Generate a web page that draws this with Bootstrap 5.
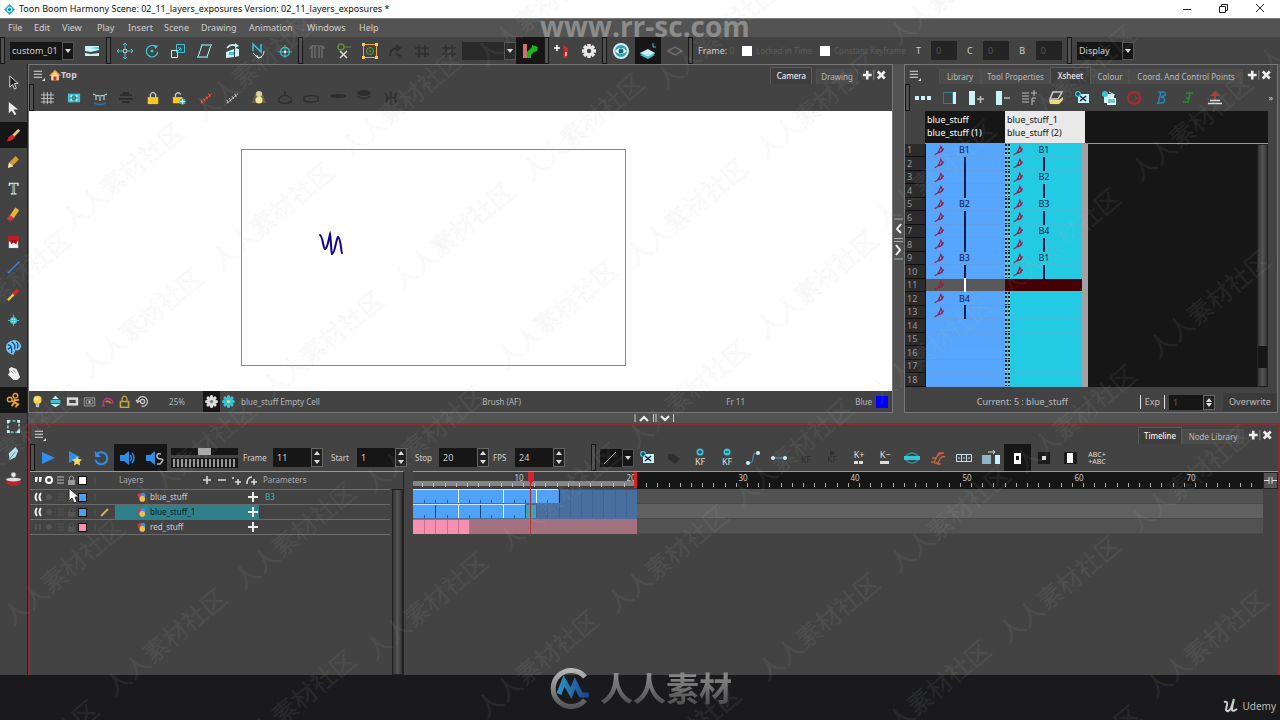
<!DOCTYPE html>
<html lang="en">
<head>
<meta charset="utf-8">
<meta name="viewport" content="width=device-width, initial-scale=1">
<title>Toon Boom Harmony</title>
<link href="https://cdn.jsdelivr.net/npm/bootstrap@5.3.0/dist/css/bootstrap.min.css" rel="stylesheet">
<style>
:root{--panel:#434343;--gap:#535353;--line:#777;--well:#161616;--ui:"Noto Sans","Noto Sans CJK SC",sans-serif}
body{font:9px/14px var(--ui);color:#cfcfcf;background:var(--gap);overflow-x:hidden}
button{background:none;border:0;padding:0;color:inherit;font:inherit}
svg{display:block;flex:none;overflow:visible}
input,select{font:inherit;color:inherit;border:0;border-radius:0;padding:0;margin:0;appearance:none}
.titlebar{height:18px;background:#fff;color:#111;font-size:9px;line-height:18px}
.titlebar .win{width:37px;height:18px}
.menubar{height:19px;background:var(--gap);border-top:1px solid #777}
.menubar a{color:#cfcfcf;text-decoration:none;font-size:9px;line-height:17px}
.toolbar-main{height:27px;background:var(--panel);display:grid;grid-template-columns:6px 72px 28px 6px 186px 6px 158px 54px 28px 4px 54px 6px 80px 6px 48px 78px 91px 51px 52px 53px 6px 1fr}
.grip{width:5px;border:1px solid #161616;background:#505050;align-self:stretch;flex:none}
.tools{display:flex;flex:none;align-self:stretch}
.tools button{flex:1 1 0;min-width:0;display:flex;align-items:center;justify-content:center}
.tools .on,.on{background:#161616}
.dim{opacity:.3}
.combo{display:flex;height:18px;background:var(--well);align-items:center;position:relative}
.combo select{background:transparent;width:100%;min-width:0;height:18px;padding-left:2px;font-size:9px}
.combo.off{background:#2a2a2a}
.combo i{flex:none;width:12px;height:18px;border:1px solid #555;position:relative}
.combo i::after,.spin b::after,.spin b::before{content:"";position:absolute;border:3px solid transparent}
.combo i::after{left:2px;top:6px;border-top:4px solid #ddd}
#display{width:57px}
.off{color:#5b5b5b}
.keys{font-size:8px}
.keys input{flex:none}
.num{height:19px;width:26px;background:#242424;color:#555;padding-left:5px}
.tick{width:10px;height:10px;background:#fff}
.sidebar-tools{width:28px;background:var(--panel);border-right:1px solid #222}
.sidebar-tools>div{height:424px;margin-top:5px;display:flex;flex-direction:column;justify-content:space-between}
.sidebar-tools button{width:27px;height:26px;display:flex;align-items:center;justify-content:center}
.pane{background:var(--panel);border:1px solid var(--line)}
.upper{height:349px}
.pane-head{height:19px}
.pane-tools{height:27px}
.tabbtn{background:#4b4b4b;color:#b9b9b9;height:15px;align-self:flex-end;border:1px solid #505050;border-bottom:0;font-size:8px;line-height:14px;white-space:nowrap;flex:none}
.tabbtn.active{background:#3e3e3e;color:#fff;height:17px;border-color:#5a5a5a}
.px{width:30px;flex:none}
.stage{background:#fff;height:280px;padding:38px 0 0 212px;overflow:hidden}
.status{height:21px;font-size:8px;color:#b5b5b5}
.gutter{width:11px}
.g-cam{width:370px}.g-xs{width:318px}.g-play{width:132px}.g-kf{width:476px}.g-status{width:122px}
.xpane{width:374px;margin-right:2px}
.xhead{height:33px;background:#161616;margin-left:20px;margin-right:9px;font-size:9px;line-height:13px;border-bottom:1px solid #999}
.xhead div{width:80px;padding:2px;color:#fff}
.xhead .cur{background:#e9e9ea;color:#111}
.xwrap{height:243px;background:#161616;margin-right:9px}
.xs{border-collapse:collapse;table-layout:fixed;width:180px;height:243px;font-size:9px;line-height:12px}
.xs th{width:20px;background:#2b2b2b;color:#999;font-weight:400;padding:0 0 0 2px;border-bottom:1px solid #111;border-right:1px solid #111}
.xs td{width:80px;padding:0;color:#101a48}
.xs td>div{display:flex;align-items:center;height:12px}
.xs .c1{background-color:#55a6fc;border-bottom:1px solid #639fe9}
.xs .c2{background-color:#22cae4;border-bottom:1px solid #3ac0dc;border-right:6px solid #a3a0a2}
.xs .c2:not(.sel){background-image:repeating-linear-gradient(#123 0 2px,#7cc 2px 4px),repeating-linear-gradient(#123 0 2px,#7cc 2px 4px);background-size:2px 100%;background-repeat:no-repeat;background-position:0 0,3px 0}
.xs .pen{width:29px;padding-left:8px}
.xs .val{width:20px;text-align:center}
.xs .val u{display:block;width:2px;height:14px;margin:0 auto;background:#101a48}
.xs .sel.c1{background:#595959}.xs .sel .val u{background:#fff}
.xs .sel.c2{background:#450003}
.vscroll{width:11px;background:linear-gradient(90deg,#333,#555,#333);border:1px solid #222}
.vscroll.end{background:linear-gradient(#161616,#161616) 0 92%/9px 22px no-repeat,linear-gradient(90deg,#333,#555,#333)}
.xfoot{padding-top:6px;height:24px;color:#bbb}
.xfoot .field{width:34px;height:15px;font-size:9px;color:#5b5b5b}
.splitbar{height:10px}
.timeline{border:2px solid #8a2c33;border-bottom:0;background:var(--panel)}
.field{height:19px;background:var(--well);color:#ccc;width:38px;padding-left:4px;font-size:9px}
.spin{width:12px;height:19px;flex:none;background:#222;border:1px solid #666}
.spin b{display:block;height:100%;position:relative}
.spin b::before{left:2px;top:-1px;border-bottom:4px solid #ddd}
.spin b::after{left:2px;bottom:-1px;border-top:4px solid #ddd}
.fgroup label{white-space:nowrap;font-size:8px}
.lt{width:374px;font-size:8px;line-height:12px;border-top:1px solid #999;border-right:1px solid #222}
.layers{border-collapse:collapse;table-layout:fixed;width:360px}
.layers td,.layers th{padding:0;border-bottom:1px solid #6a6a6a;font-weight:400;color:#ccc}
.layers th{height:17px;color:#aaa}.layers td{height:15px}
.layers .cur{background:#2f808b;color:#06222c}
.layers .nm{padding-left:21px}
.tracks{min-width:0;border-top:1px solid #999}
.fit{width:15px;height:17px;background:#555;border:1px solid #222}
.footer-bar{height:45px;background:#1a1a1d}
.brand{left:50%;bottom:12px;margin-left:-92px;z-index:6;font:700 33px/40px "Noto Sans CJK SC",sans-serif;color:transparent;background:linear-gradient(#999,#484848);background-clip:text;-webkit-background-clip:text}
.site{left:540px;top:9px;z-index:6;font:700 28px/34px "Open Sans",sans-serif;color:#8c8c8c}
.marks{inset:0;z-index:5;pointer-events:none}
.marks text{font:25px "Noto Sans CJK SC",sans-serif;fill:#ddd;fill-opacity:.08;stroke:#888;stroke-opacity:.06}
.udemy{font:10px/14px "Noto Sans",sans-serif;color:#bbb}
.pointer{left:68px;top:487px;z-index:7}
</style>
</head>
<body class="d-flex flex-column min-vh-100 position-relative">

<header class="titlebar d-flex align-items-center">
  <span class="ps-1 pe-1"><svg data-i="app" width="11" height="11"></svg></span>
  <span class="flex-grow-1">Toon Boom Harmony Scene: 02_11_layers_exposures Version: 02_11_layers_exposures *</span>
  <button class="win" aria-label="Minimize"><svg width="37" height="18"><path d="M14 9.500h8" stroke="#222"/></svg></button>
  <button class="win" aria-label="Restore"><svg width="37" height="18"><path d="M13.500 6.500h6v6h-6zM15.500 6v-1.500h6v6h-2" stroke="#222" fill="none"/></svg></button>
  <button class="win" aria-label="Close"><svg width="37" height="18"><path d="M13 4l8 8M21 4l-8 8" stroke="#222"/></svg></button>
</header>

<nav class="menubar d-flex" id="menu"></nav>

<div class="toolbar-main align-items-center">
  <span class="grip"></span>
  <div class="ps-1 pe-1"><div class="combo"><select aria-label="Workspace"><option>custom_01</option></select><i></i></div></div>
  <div class="tools" data-t="flag"></div>
  <span class="grip"></span>
  <div class="tools" data-t="move rotate scale skew maint spline center"></div>
  <span class="grip"></span>
  <div class="tools" data-t="bones cutx box ~curve ~hash ~hash"></div>
  <div class="combo off"><select aria-label="Preset" disabled></select><i></i></div>
  <div class="tools" data-t="*anim"></div>
  <span class="grip"></span>
  <div class="tools" data-t="addkey gear"></div>
  <span class="grip"></span>
  <div class="tools" data-t="eye *stack ~plane"></div>
  <span class="grip"></span>
  <span class="ps-1 text-nowrap">Frame: <span class="off">0</span></span>
  <label class="keys d-flex align-items-center gap-1 off text-nowrap"><input type="checkbox" class="tick">Locked in Time</label>
  <label class="keys d-flex align-items-center gap-1 off text-nowrap"><input type="checkbox" class="tick">Constant Keyframe</label>
  <label class="d-flex align-items-center justify-content-around">T <input class="num" value="0"></label>
  <label class="d-flex align-items-center justify-content-around">C <input class="num" value="0"></label>
  <label class="d-flex align-items-center justify-content-around">B <input class="num" value="0"></label>
  <span class="grip"></span>
  <div class="ps-1"><div class="combo" id="display"><select aria-label="Display"><option>Display</option></select><i></i></div></div>
</div>

<main class="d-flex flex-grow-1">
  <aside class="sidebar-tools flex-shrink-0"><div id="side"></div></aside>
  <div class="d-flex flex-column flex-grow-1 w-100 overflow-hidden">
    <div class="upper d-flex">
      <section class="pane flex-grow-1 overflow-hidden">
        <div class="pane-head d-flex align-items-center">
          <button class="ps-1" aria-label="View menu"><svg data-i="burger" width="12" height="12"></svg></button>
          <svg data-i="home" width="12" height="12" class="ms-1"></svg><span class="fw-bold flex-grow-1">Top</span>
          <button class="tabbtn active px-1 me-1" style="min-width:42px">Camera</button>
          <button class="tabbtn px-1" style="min-width:41px">Drawing</button>
          <span class="px d-flex ms-1"><button aria-label="Add and close view"><svg data-i="addclose" width="28" height="14"></svg></button></span>
        </div>
        <div class="pane-tools d-flex"><span class="grip"></span>
          <div class="tools g-cam" data-t="grid safe lash ~under lock lockadd onion onion2 lamp ~disc ~disc2 ~disc3 ~disc4 ~mirror"></div>
        </div>
        <div class="stage">
          <svg width="385" height="217"><rect x=".5" y=".5" width="384" height="216" fill="none" stroke="#8b8b8b"/><path d="M79 86c3 2 3 13 5 14 3-1 4-12 5-15 1 4 1 18 2 20 3 0 4-15 6-17 3 1 3 15 4 16" fill="none" stroke="#12009c" stroke-width="2" stroke-linecap="round"/></svg>
        </div>
        <div class="status d-flex align-items-center">
          <div class="tools g-status" data-t="bulb stackup matte mask fish lock2 reset"></div>
          <span style="width:52px" class="text-center">25%</span>
          <span class="tools" style="width:34px" data-t="*flower flowerc"></span>
          <span class="text-nowrap ms-1 flex-grow-1">blue_stuff Empty Cell</span>
          <span style="width:244px">Brush (AF)</span>
          <span style="width:129px">Fr 11</span>
          <span class="pe-1">Blue</span><span style="width:12px;height:12px;background:#00f" class="me-1"></span>
        </div>
      </section>
      <div class="gutter flex-shrink-0 d-flex align-items-center"><svg width="11" height="44"><path d="M1 2h9M1 21.500h9M1 24.500h9M1 42h9" stroke="#aaa"/><path d="M8 7l-4 5 4 4M3 28l4 5-4 5" stroke="#eee" stroke-width="2" fill="none"/></svg></div>
      <section class="pane xpane flex-shrink-0">
        <div class="pane-head d-flex">
          <button class="ps-1 me-auto" aria-label="View menu"><svg data-i="burger" width="12" height="12"></svg></button>
          <button class="tabbtn px-1" style="min-width:42px">Library</button>
          <button class="tabbtn px-1" style="min-width:69px">Tool Properties</button>
          <button class="tabbtn active px-1" style="min-width:41px">Xsheet</button>
          <button class="tabbtn px-1" style="min-width:38px">Colour</button>
          <button class="tabbtn px-1" style="min-width:114px">Coord. And Control Points</button>
          <span class="px d-flex ms-1 align-items-center"><button aria-label="Add and close view"><svg data-i="addclose" width="28" height="14"></svg></button></span>
        </div>
        <div class="pane-tools d-flex"><span class="grip"></span>
          <div class="tools g-xs" data-t="dots colr colp colm listf script cellx cellcopy onionr bee jay upload"></div>
          <button class="ms-auto px-1" aria-label="More tools">»</button>
        </div>
        <div class="xhead d-flex"><div>blue_stuff<br>blue_stuff (1)</div><div class="cur">blue_stuff_1<br>blue_stuff (2)</div></div>
        <div class="xwrap d-flex"><table class="xs"><tbody id="xs"></tbody></table>
          <div class="vscroll end ms-auto"></div></div>
        <div class="xfoot d-flex align-items-center">
          <span class="flex-grow-1 text-center">Current: 5 : blue_stuff</span>
          <label class="border-start border-end px-1" for="exp">Exp</label>
          <input id="exp" class="field ms-1" value="1"><span class="spin me-2" style="height:15px"><b></b></span>
          <button style="width:54px;height:18px;background:#3a3a3a">Overwrite</button>
        </div>
      </section>
    </div>
    <div class="splitbar d-flex justify-content-center"><svg width="40" height="10"><path d="M1 1v8M19.500 1v8M22 1v8M39.500 1v8" stroke="#ccc"/><path d="M6 8l4-4 4 4M27 3l4 4 4-4" stroke="#eee" stroke-width="2" fill="none"/></svg></div>

    <section class="timeline flex-grow-1 d-flex flex-column">
      <div class="pane-head d-flex">
        <button class="ps-1 me-auto" aria-label="View menu"><svg data-i="burger" width="12" height="12"></svg></button>
        <button class="tabbtn active px-1" style="min-width:44px">Timeline</button>
        <button class="tabbtn px-1" style="min-width:62px">Node Library</button>
        <span class="px d-flex ms-1 align-items-center"><button aria-label="Add and close view"><svg data-i="addclose" width="28" height="14"></svg></button></span>
      </div>
      <div class="pane-tools d-flex align-items-center fgroup"><span class="grip"></span>
        <div class="tools g-play" data-t="play playstar loop *sound *sounds"></div>
        <svg width="72" height="26"><rect x="4" y="3" width="67" height="7" fill="#161616"/><rect x="31" y="3" width="13" height="7" fill="#aaa"/><rect x="4" y="13" width="67" height="10" fill="#161616"/><path d="M6 18h64" stroke="#999" stroke-width="8" stroke-dasharray="2 2"/></svg>
        <label for="f1" class="ps-1" style="width:34px">Frame</label><input id="f1" class="field" value="11"><span class="spin"><b></b></span>
        <label for="f2" class="ps-2" style="width:34px">Start</label><input id="f2" class="field" value="1"><span class="spin"><b></b></span>
        <label for="f3" class="ps-2" style="width:32px">Stop</label><input id="f3" class="field" value="20"><span class="spin"><b></b></span>
        <label for="f4" class="ps-1" style="width:26px">FPS</label><input id="f4" class="field" value="24"><span class="spin"><b></b></span>
        <span class="grip" style="margin-left:26px"></span>
        <button class="combo ms-1" style="width:34px" aria-label="Ease type"><svg width="22" height="16"><path d="M4 14L16 2" stroke="#aaa"/></svg><i></i></button>
        <div class="tools g-kf" data-t="cellx ~tag kfp kfm ease linear ~kfx ~kfy kplus kminus hold swap cells spread *sq1 sq2 sq3 abc"></div>
      </div>
      <div class="d-flex flex-grow-1">
        <div class="lt d-flex flex-shrink-0 align-items-stretch">
          <div><table class="layers"><colgroup><col style="width:85px"><col style="width:144px"><col></colgroup><tbody id="layers"></tbody></table></div>
          <div class="vscroll ms-auto" style="margin-top:17px"></div>
        </div>
        <div style="width:9px" class="flex-shrink-0"></div>
        <div class="tracks flex-grow-1 d-flex align-items-start overflow-hidden"><svg id="tracks" class="flex-grow-1 flex-shrink-1" width="850" height="66"></svg><button class="fit flex-shrink-0" aria-label="Fit timeline"><svg width="13" height="15"><path d="M0 7.500h5M8 7.500h5M5 4v7M8 4v7" stroke="#ddd"/></svg></button></div>
      </div>
    </section>
  </div>
</main>
<footer class="footer-bar d-flex align-items-center justify-content-end pe-1 pt-3">
  <svg width="20" height="16"><path d="M2 4q4-1 3 3t-1 5q2 3 5-2l3-9m0 0q-2 8-2 11 1 2 5-1" stroke="#ccc" stroke-width="2" fill="none"/></svg><span class="udemy">Udemy</span>
</footer>

<div class="brand position-absolute d-flex align-items-center"><svg width="44" height="42"><defs><linearGradient id="g1" y2="1" x2="0"><stop stop-color="#b5b5b5"/><stop offset="1" stop-color="#555"/></linearGradient><linearGradient id="g2"><stop stop-color="#2b8fc4"/><stop offset="1" stop-color="#1b3f8c"/></linearGradient></defs><path d="M37 11A18 18 0 1 0 37 34" fill="none" stroke="url(#g1)" stroke-width="5"/><path d="M11 28L16 15l7 12 4-10 6 12h8" fill="none" stroke="url(#g2)" stroke-width="5"/></svg><span class="ms-2">人人素材</span></div>
<div class="site position-absolute">www.rr-sc.com</div>
<svg class="marks position-absolute w-100 h-100 overflow-hidden" id="marks" aria-hidden="true"></svg>
<svg class="pointer position-absolute" width="12" height="18"><path d="M1 1v13l3-3 2 5 3-1-2-5h4z" fill="#fff" stroke="#222"/></svg>

<script>
const C='#3cc4d6',L='#c9f3f7',W='#eee',B='#2f8fe8';
const p=(d,s,w)=>`<path d="${d}" fill="none" stroke="${s}" stroke-width="${w||1}"/>`;
const f=(d,c)=>`<path d="${d}" fill="${c}"/>`;
const r=(x,y,w,h,c,s)=>`<rect x="${x}" y="${y}" width="${w}" height="${h}" fill="${c}" ${s?`stroke="${s}"`:''}/>`;
const o=(x,y,q,c,s,w)=>`<circle cx="${x}" cy="${y}" r="${q}" fill="${c}" ${s?`stroke="${s}" stroke-width="${w||1}"`:''}/>`;
const t=(x,y,v,c,z)=>`<text x="${x}" y="${y}" fill="${c}" font-size="${z||8}" text-anchor="middle">${v}</text>`;
const petals=(c,k)=>[0,45,90,135].map(a=>`<rect x="0" y="6" width="16" height="4" rx="2" fill="${c}" transform="rotate(${a} 8 8)"/>`).join('')+o(8,8,2,k);
const sheetx=r(4,4,11,9,L)+p('M6 6l6 5M12 6l-6 5','#124',1.5)+o(4,4,3,C)+p('M2 4h4M4 2v4','#124');
const I={
app:f('M8 0l8 8-8 8-8-8z','#2aa8c8')+o(8,8,4,'#8fe')+o(8,8,2,'#167'),
burger:p('M1 3h11M1 7h11M1 11h11','#ddd',1.5)+f('M16 12v4h-4z','#ddd'),
home:f('M8 1L0 9h3v6h10V9h3z','#f0a040')+f('M8 4l-5 5v6h10V9z','#fbd79c')+r(6,10,4,5,'#c33'),
addclose:p('M-4 8h10M1 3v10','#eee',3)+p('M8.500 2v12','#888')+p('M13 4l8 8M21 4l-8 8','#eee',3),
flag:f('M1 3h14v4l-8 2-6-1zM1 10l6 1 8-1v3H1z',L)+f('M7 5l8-1v2z',C),
move:o(8,8,2,'none',L)+p('M8 5V0M8 11v5M5 8H0M11 8h5',C)+p('M6 2l2-2 2 2M6 14l2 2 2-2M2 6L0 8l2 2M14 6l2 2-2 2',C),
rotate:p('M12 3A6.500 6.500 0 1 0 14.500 9',C,1.500)+f('M10 1l5 1-3 4z',C)+o(8,8,1.800,C),
scale:p('M6.500 1.500h8v8h-8z',C)+p('M1.500 7.500h6v7h-6z',L)+p('M6 10l5-5M8 5h3v3',C),
skew:p('M5 2h9l-4 12H1z',L)+r(4,1,2,2,C)+r(13,1,2,2,C)+r(9,13,2,2,C)+r(0,13,2,2,C),
maint:p('M3 5q4-5 9-2',L,1.500)+f('M11 0l4 3-4 2z',L)+f('M2 9l8-3v8l-8 1zM11 5l4 1v7l-4 1z',L)+r(5,9,5,3,C),
spline:p('M3 8V1l8 8V1',C,1.500)+p('M3 10l5 5q6-1 6-7M7 12l1 3 4-1',L),
center:o(8,9,5,'none',C,1.500)+p('M8 1v15M0 9h16',C)+o(8,9,1.500,L),
bones:p('M3 15V4M6 15V4M10 15V4M13 15V4M1 6q1-4 5-3h6q3 0 3 3',"#777",1.200),
cutx:o(6,4,3,'none','#5a8f3c',1.500)+p('M9 4h7','#5a8f3c')+p('M5 8l7 7M12 8l-7 7','#ddd',1.500),
box:p('M1.500 1.500h13v13h-13z','#e9a63a')+o(8,8,3.500,'none','#5a9f3c')+o(8,8,1,'#5a9f3c')+[[0,0],[13,0],[0,13],[13,13]].map(a=>r(a[0],a[1],3,3,'#ffc35a')).join(''),
curve:p('M2 13q0-8 8-8M8 2l4 3-4 3M8 11l5 2','#000',2),
hash:p('M1 5h14M1 11h14M5 2v12M11 2v12','#000',1.500),
anim:f('M1 1h4v14H1z','#c9736b')+f('M5 15V9l5-5V2l6 2-1 4-3 1-3 3v3z','#1cb51c'),
addkey:p('M0 5h6M3 2v6','#fff',1.500)+f('M9 2l5 3-1 10H9l1-5z','#d22')+r(11,9,2,4,'#fbb'),
gear:[0,45,90,135].map(a=>`<rect x="0" y="6" width="16" height="4" fill="#e8e8e8" transform="rotate(${a} 8 8)"/>`).join('')+o(8,8,4,'#444','#e8e8e8',3),
eye:o(8,8,7,'#3a9fb5',L,2)+f('M2 8q6-6 12 0-6 6-12 0','#eff')+o(8,8,2.500,'#167'),
stack:f('M0 12l8-3 7 3-7 4z',C)+f('M0 10l8-4 7 4-7 4z',L)+p('M0 10l8 4 7-4',C)+p('M13 0v4h3',C),
plane:p('M1 8l7-4 7 4-7 4z','#ccc',1.500),
grid:p('M4.500 1v14M8.500 1v14M12.500 1v14M1 4.500h15M1 8.500h15M1 12.500h15',"#ccc"),
safe:r(1,3,14,10,C)+r(4,5,8,6,'#e8ffff')+p('M8 4v8M3 8h10','#167')+p('M6 6h4v4H6z','#167'),
lash:p('M1 4q7 4 14 0M4 6v4M8 7v4M12 6v4',L)+p('M2 13q6 3 12 0',"#2a6faf",1.500),
under:p('M2 5h12M5 3h6M1 9h14M4 12h8','#000',2),
lock:p('M5 8V4q3-5 6 0v4',"#ccc",1.500)+r(2,7,12,8,'#f7c81e'),
lockadd:p('M4 7V4q3-4 6 0',"#ccc",1.500)+r(1,7,11,7,'#f7c81e')+o(12,12,3.500,C)+p('M12 9v6M9 12h6','#fff'),
onion:p('M2 14L15 3','#c33',1.500)+p('M2 10l2 4M5 8l2 4M8 6l2 3M11 3l2 4','#e2763a'),
onion2:p('M2 14L15 3','#ccc',1)+p('M2 10l2 4M5 8l2 4M8 6l2 3M11 3l2 4','#ccc'),
lamp:f('M5 2h6l4 11H1z','#6a654a')+o(8,4,3,'#d8cf9a')+o(8,10,3.500,'#f4e89a'),
disc:p('M2 8q6-5 12 0v4q-6 3-12 0zM8 6V1','#000',1.500),disc2:p('M1 7q7-3 14 0v4q-7 2-14 0z','#000',1.500),disc3:'<ellipse cx="8" cy="6" rx="8" ry="2" fill="#000"/>',disc4:'<ellipse cx="8" cy="3" rx="7" ry="3" fill="#000"/>'+p('M1 6q7 5 14 0','#000',1.500),
mirror:p('M8 1v14M2 3q4 4 1 10M14 3q-4 4-1 10M3 8h4M9 8h4','#000',1.500),
bulb:o(8,6,5,'#ffd24a')+r(6,10,4,5,'#bbb')+o(7,5,2,'#fff7c0'),
stackup:f('M8 1l4 4H4z',L)+r(2,6,12,4,C)+f('M2 11h12l-6 4z',L),
matte:r(1,3,14,10,'#ddd')+r(4,6,8,4,'#444'),mask:p('M1.500 3.500h13v10h-13zM4 6h8v5H4z','#aaa')+r(7,7,2,3,'#ddd'),
fish:p('M3 9Q5 2 11 5t2 6M3 9l-1 4h3','#b13a7a',2)+p('M6 9q2-3 6 1','#e8842a',2),
lock2:p('M5 8V4q3-5 6 0v4',"#caa23a",1.500)+p('M3 8h10v7H3z','#caa23a',2),
reset:p('M2 8A6 6 0 1 1 7 14M0 6l2 3 3-2',"#ccc",1.500)+o(8,8,2.500,'none','#ccc',1.500),
flower:petals('#ddd','#777'),flowerc:petals('#35c5d5','#f0d070'),
dots:r(0,6,4,4,L)+r(6,6,4,4,L)+r(12,6,4,4,L),
colr:p('M1.500 2.500h9v11h-9z','#2f7f8a')+r(11,2,3,12,L),
colp:r(1,1,6,14,L)+p('M9 9h7M12.500 6v7','#bbb',1.5),colm:r(1,1,6,14,L)+p('M9 8h6','#bbb',1.500),
listf:p('M1 3h7M1 6h7M1 9h7M1 12h7','#bbb')+p('M10 3h6M13 0v6M11 15V8h4M11 11h3','#bbb'),
script:p('M5 2h9l-4 7H2z',"#ccc",1.500)+f('M1 10h10l4-3v3l-4 4H2z','#e8e07a'),
cellx:sheetx,cellcopy:r(3,4,10,9,L)+r(6,8,9,7,'#dff')+p('M7 10h7M7 12h7','#2a7f8f')+o(4,4,3,C)+p('M8 2l6 3','#ddd'),
onionr:o(7,8,6,'none','#a82a2a',2)+p('M5 3q8 5 0 10M8 8h7M12 2q3 6 0 12','#a82a2a'),
bee:p('M4 2h6q4 3-3 5 6 1 2 6H3M7 2L4 14','#2a86b8',1.500),jay:p('M6 3h7M10 3L8 12H3M6 8h4','#2c8a2c',1.500),
upload:f('M8 1l5 5H3z','#b83a3a')+p('M8 5v6','#b83a3a',2)+p('M1 13.500h14M3 10.500h10','#ddd',1.500),
play:f('M2 2l13 6-13 6z',B),playstar:f('M2 1l11 6-11 6z',B)+f('M10 6l1.500 3 3.500.500-2.500 2.500.700 3.500-3.200-1.700L7 15.500l.600-3.500L5 9.500 8.500 9z','#f5d76a'),
loop:p('M4 4A6 6 0 1 1 2.500 10',B,2)+f('M2 1v6h6z',B),
sound:f('M1 5h4l5-4v14l-5-4H1z',B)+p('M11 5q3 3 0 6M13 3q4 5 0 10',B,1.500),
sounds:f('M0 5h4l5-4v14l-5-4H0z',B)+p('M15 4q-4-1-4 2t4 3-1 5h-3','#bbb',1.500),
tag:f('M2 4h6l6 5-5 5-7-5z','#000'),
kfp:o(8,2,3.500,C)+p('M6 2h4M8 0v4','#134')+t(8,15,'KF','#ddd',9),kfm:o(8,2,3.500,C)+p('M6 2h4','#134')+t(8,15,'KF','#ddd',9),
ease:p('M3 13q5 1 5-5t5-5','#4a9fe0')+o(3,13,2,L)+o(13,3,2,L),linear:p('M2 8h12','#4a9fe0')+o(2,8,2,L)+o(14,8,2,L),
kfx:t(8,13,'KF','#000',9),kfy:t(8,13,'KF','#000',9)+f('M6 0l5 3-5 3z','#000'),
kplus:t(8,8,'K+','#ddd',9)+r(3,11,4,3,'#ddd')+r(8,11,4,3,'#ddd'),kminus:t(8,8,'K−','#ddd',9)+r(3,11,9,3,'#ddd'),
hold:p('M2 6q6-6 12 0M2 10q6 6 12 0','#2f8f9c',1.500)+r(0,6,16,4,'#35c5d5'),
swap:p('M2 8h4q3-5 8-5M4 13h4q3-8 7-6M1 12h3l5-9h4M7 14h4','#c4643c',1.500),
cells:p('M.500 4.500h15v7H.500zM5.500 4v8M10.500 4v8',"#cde")+p('M2 8h2M7 8h2M12 8h2','#cde'),
spread:r(-1,5,9,9,'#8fb5c4')+r(12,5,5,9,L)+p('M5 2h7M10 0l2 2-2 2','#ddd'),
sq1:r(5,3,7,11,'#fff')+r(7,6,3,4,'#111'),sq2:r(2,2,12,12,'#1b1b1b')+r(6,6,4,4,'#ddd'),sq3:r(2,2,13,12,'#1b1b1b')+r(5,3,6,10,'#fff'),
abc:t(8,7,'ABC+','#ddd',7)+t(8,14,'+ABC','#ddd',7),
arrow:f('M4 1v12l3-3 2 5 2-1-2-5h4z','#222')+p('M4 1v12l3-3 2 5 2-1-2-5h4z','#ddd'),arroww:f('M3 1v12l3-3 3 5 2-1-3-5h5z','#eee'),
brush:f('M1 14q2-6 6-7l3 2q-3 5-9 5','#d9232b')+p('M8 8l6-6','#f0c878',3),
pencil:p('M5 11L12 4','#d99a2a',5)+f('M2 15l1-6 5 4z','#fbe3b8'),
text:'<text x="8" y="14" fill="#333" stroke="#ddd" stroke-width=".8" font-size="17" text-anchor="middle" font-family="Liberation Serif">T</text>',
eraser:p('M6 11l6-9','#e8b23a',5)+p('M3 14l3-4','#d9324a',5),
paint:r(3,7,10,8,'#eee')+r(2,2,12,6,'#c01c24')+f('M4 7h8l-1 4-3-2-2 2z','#a0101a'),
line:p('M2 14L14 2',B,1.500),dropper:p('M2 14l7-7','#f0c060',2.500)+p('M8 8l5-5','#d22',4),
pivot:o(8,8,3,'#dff',C,1.500)+p('M8 2v12M2 8h12',C),
morph:f('M8 0q7 0 8 7-1 5-6 4l-2 5Q0 14 0 8t8-8','#7cc8f7')+p('M2 5q5 0 4 9M6 2q5 3 3 8M2 10l4-3M11 2q3 3 1 7','#15507f',1.500),
hand:f('M3 3l3-2 2 1 3 1 2 4 2 5-3 3H8L2 9l2-2z','#eee')+p('M5 5l3 3M8 4l2 3','#888'),
rig:o(10,3,2.500,'none','#f0a030',1.500)+o(4,7,2.500,'none','#f0a030',1.500)+p('M9 6v4l-3 4M6 9l8-2M9 10l4 2-3 3','#f0a030',2),
marquee:'<path d="M2 2h12v12H2z" fill="none" stroke="#8fe3ee" stroke-width="1.500" stroke-dasharray="3 2"/>'+r(1,1,3,3,L)+r(12,1,3,3,L)+r(1,12,3,3,L)+r(12,12,3,3,L),
quill:f('M3 8l7-7 3 4-3 7-6 3z','#b9e6ee')+p('M3 15l7-9','#3a8fa0'),
pot:'<ellipse cx="8" cy="10" rx="8" ry="5" fill="#b3262c"/><ellipse cx="8" cy="8" rx="8" ry="2" fill="#ddd"/>'+o(8,3,2.500,'#eee','#999'),
pen2:p('M1 14q6-1 9-12l2 4q-1 5-5 5l1-4M11 10l3-5',"#9a1c44",1.700),
layer:f('M2 4l5-3 2 5-5 4z','#d33')+o(11,5,4,'#3b8fe0')+o(10,11,4.500,'#f3c14a'),
};
const svg=(n,s=16)=>`<svg width="${s}" height="${s}" viewBox="0 0 16 16" aria-hidden="true">${I[n]}</svg>`;
document.querySelectorAll('[data-i]').forEach(e=>{e.setAttribute('viewBox',e.dataset.i=='addclose'?'-5 0 32 16':'0 0 16 16');e.innerHTML=I[e.dataset.i]});
document.querySelectorAll('[data-t]').forEach(e=>e.innerHTML=e.dataset.t.split(' ').map(n=>{
  const k=n.replace(/^[*~]/,''),st=e.closest('.status');
  return `<button class="${n[0]=='*'?'on':''}" aria-label="${k}"><span class="${n[0]=='~'?'dim':''}">${svg(k,st?13:['onion','onion2','grid','lock','lockadd','safe','gear','center','rotate'].includes(k)?14:16)}</span></button>`}).join(''));
menu.innerHTML=[['File',34],['Edit',28],['View',35],['Play',31],['Insert',36],['Scene',37],['Drawing',48],['Animation',58],['Windows',52],['Help',30]].map(([n,w],i)=>`<a href="#" class="${i?'':'ps-2'}" style="width:${w}px">${n}</a>`).join('');
side.innerHTML='arrow arroww *brush pencil text eraser paint line dropper pivot morph hand *rig marquee quill pot'.split(' ').map(n=>{const k=n.replace('*','');return `<button class="${n[0]=='*'?'on':''}" aria-label="${k}">${svg(k,15)}</button>`}).join('');
const c1={1:'B1',5:'B2',9:'B3',12:'B4'},c2={1:'B1',3:'B2',5:'B3',7:'B4',9:'B1'};
const cell=(m,i,last,c)=>`<td class="${c}${i==11?' sel':''}"><div>${`<span class="pen">${i<=last?svg('pen2',11):''}</span>`}<span class="val">${m[i]||(i<=last?'<u></u>':'')}</span></div></td>`;
for(let i=1,h='';i<=18;i++){h+=`<tr><th scope="row">${i}</th>${cell(c1,i,13,'c1')}${cell(c2,i,10,'c2')}</tr>`;xs.innerHTML=h}
const icons=(col,on,pencil,head)=>`<svg width="85" height="14">${head?f('M5 4h3l-1 5H5zM9 4h3l-1 5H9z','#eee'):on?p('M7 3q-3 4 0 8M11 3q-3 4 0 8','#eee',2):p('M6 4v6M10 4v6','#555',2)}${o(19,7,head?3:2.500,head?'none':'#555',head?'#fff':'#555',head?2:1)}${p('M27 4h7M27 7h7M27 10h7',head?'#bbb':'#555')}${r(38,7,7,5,head?'#999':'#555')}${p('M39.500 7V4q2-2 4 0v3',head?'#999':'#555')}${r(48.500,3.500,8,8,col,'#111')}${p('M65 4v7','#555')}${pencil?p('M71 11l7-7','#e0a84a',2):''}</svg>`;
layers.innerHTML=`<tr><th>${icons('#fff',0,0,1)}</th><th><div class="d-flex"><span class="ps-1 flex-grow-1">Layers</span><svg width="58" height="12"><path d="M2 6h8M6 2v8M17 6h8M31 4h2M34 8h6M37 5v6M46 10q0-7 5-7M50 8h6M53 5v6" stroke="#ddd" stroke-width="1.500" fill="none"/></svg></div></th><th class="ps-1">Parameters</th></tr>`+
[['blue_stuff','#4b9ff5',1,0,'B3'],['blue_stuff_1','#4b9ff5',1,1,''],['red_stuff','#f78fae',0,0,'']].map(a=>`<tr><td>${icons(a[1],a[2],a[3])}</td><td class="${a[3]?'cur':''}"><div class="nm d-flex align-items-center">${svg('layer',10)}<span class="flex-grow-1 ps-1">${a[0]}</span><svg width="12" height="12"><path d="M1 6h10M6 1v10" stroke="#eee" stroke-width="2"/></svg></div></td><td style="padding-left:6px;color:#37b4bd">${a[4]}</td></tr>`).join('');

/* One timeline frame is 11.2 units wide; tracks are 15 units tall below the ruler. */
const F=11.2;let s=r(0,0,'100%',17,'#161616')+r(0,0,20*F,17,'#3f3f3f')+r(0,9,20*F,5,'#858585');
for(let i=1;i<76;i++)s+=r(Math.round(i*F)-2,11,1,4,i<20?'#bbb':'#aaa');
for(let i=1;i<8;i++)s+=t(i*112-6,9,i*10,'#ccc',8);
['#525252','#616161','#525252'].forEach((c,i)=>s+=r(0,17+i*15,'100%',15,c)+r(0,31+i*15,'100%',1,'#494949'));
s+=r(0,18,20*F,30,'#496f9f')+r(0,47,20*F,15,'#a3707d')+r(0,18,13*F,13,'#4ea2f8')+r(0,33,10*F,13,'#4ea2f8')+r(10*F,33,11,13,'#3aa5b5')+r(0,48,5*F,14,'#f78fae');
for(let i=1;i<20;i++)s+=r(Math.round(i*F),i<13?28:18,1,i<13?3:13,i<13?'#245a96':'#416491')+r(Math.round(i*F),i<10?43:33,1,i<10?3:13,i<10?'#245a96':'#416491')+(i<6?r(Math.round(i*F),48,1,14,'#c86e88'):'');
[4,8,11,13].forEach(i=>s+=r(Math.round(i*F),18,1,13,i<13?'#dff':'#124'));[2,4,6,8,10].forEach(i=>s+=r(Math.round(i*F),33,1,13,i%4?'#134a80':'#dff'));
s+=r(0,17,145,1,'#cfe6ff')+r(0,32,112,1,'#cfe6ff')+r(117,0,1,62,'#b3282f')+f('M115 0h6v8l-3 4-3-4z','#d6222a')+f('M221 0h3v16h-3z','#d6222a');
tracks.innerHTML=s;
marks.innerHTML=[[63,227],[82,373],[195,118],[213,267],[263,395],[342,155],[393,287],[523,178],[497,365],[627,263],[757,157],[757,335],[628,445],[733,503],[1132,178],[1150,355],[1000,293],[871,400],[1016,470],[875,225],[477,63],[657,87],[890,43],[1015,130],[1260,70],[135,505],[4,623],[106,693],[235,587],[367,657],[478,715],[608,610],[759,678],[890,570],[1000,640],[1147,695],[-22,805],[235,755],[620,790],[870,745],[1130,530],[365,490],[-50,335],[1020,810],[283,40],[500,548],[-40,490]].map(a=>`<text transform="translate(${a[0]+8} ${a[1]+4}) rotate(-40)">人人素材社区</text>`).join('');
</script>
<script src="https://cdn.jsdelivr.net/npm/bootstrap@5.3.0/dist/js/bootstrap.bundle.min.js"></script>
</body>
</html>
